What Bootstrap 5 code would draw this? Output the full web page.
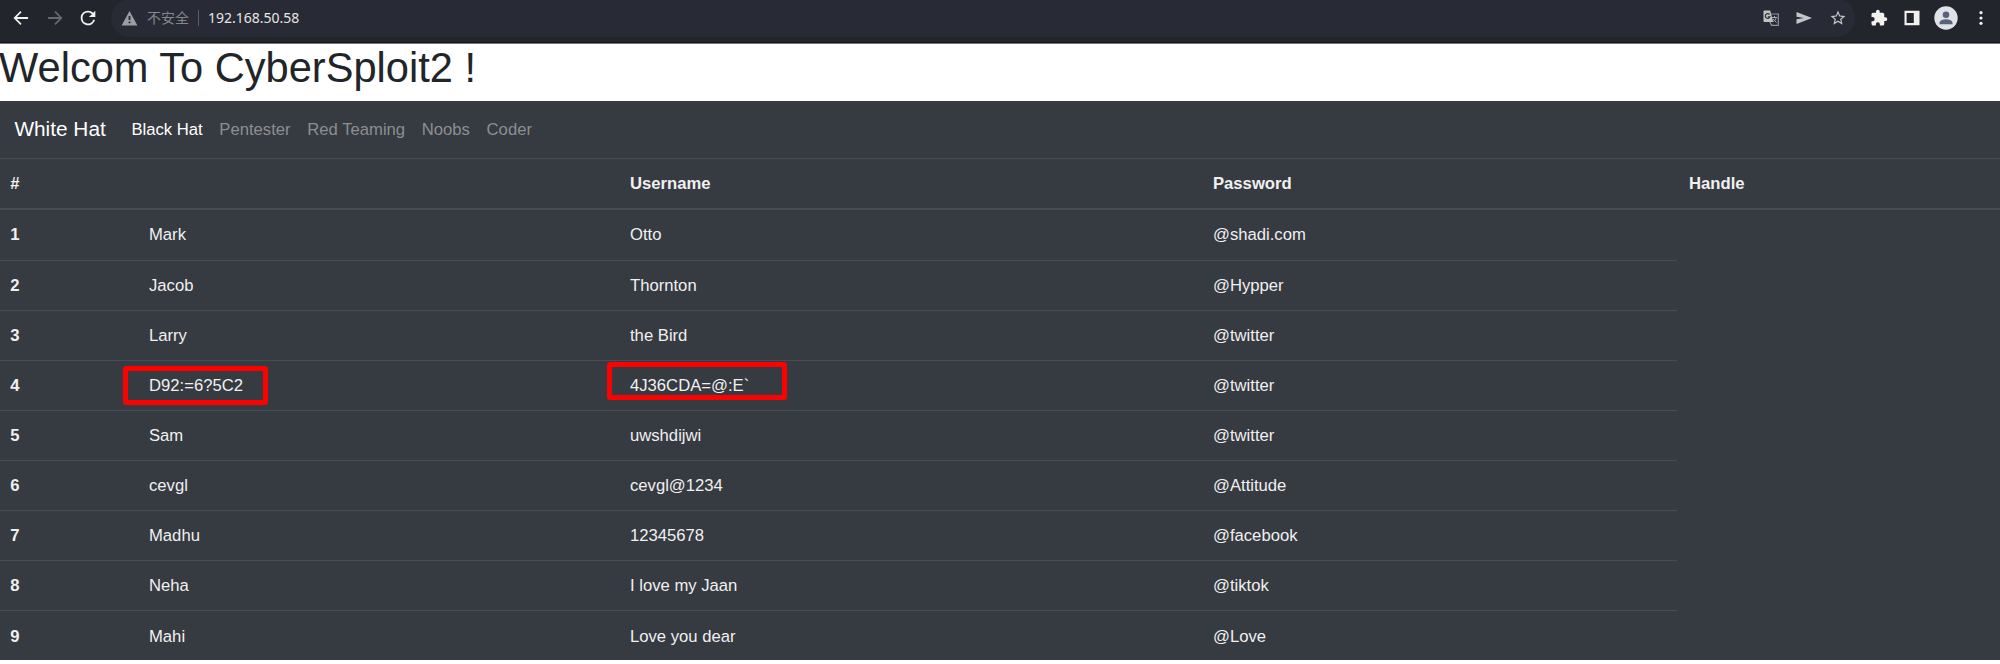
<!DOCTYPE html>
<html lang="en">
<head>
<meta charset="utf-8">
<title>CyberSploit2</title>
<link href="https://cdn.jsdelivr.net/npm/bootstrap@5.3.0/dist/css/bootstrap.min.css" rel="stylesheet">
<style>
html{font-size:16.66px}
body{font-family:"Liberation Sans",Arial,sans-serif;overflow:hidden;height:664px;line-height:1.5;background:#fff}
.chrome-bar{height:44px;background:#23252d;border-bottom:1px solid #77767a;box-shadow:inset 0 -1px #15161b;font-family:"Noto Sans","Noto Sans CJK SC",sans-serif;font-size:14px;color:#e6e6e6;padding:0 11px 8px 11px}
.omni{background:#282a35;height:38px;border-radius:19px;margin-left:12px;padding:0 8px 0 8px}
.warn-text{color:#85878c;margin-left:7px}
.sep{width:1px;height:16px;background:#5c5e66;margin:0 9px 0 9px}
svg{display:block;flex:none}
h1.title{font-size:41.6px;font-weight:400;height:57px;margin:0;line-height:48px;color:#212529;margin-left:-1px}
.hats{background:#363a41;height:57px;padding:0 0 0 14.4px}
.hats .navbar-brand{font-size:1.25rem;color:#fff;margin-right:17.3px;padding:4px 0 5px}
.hats .nav-link{color:#8c8f92;padding:9px 8.35px 8px}
.hats .nav-link.active{color:#fff}
.creds{table-layout:fixed;width:2000px;margin:0;border-collapse:separate;border-spacing:0;color:#f0f0f0}
.creds>:not(caption)>*>*{background:transparent;color:inherit;border:0;border-top:1px solid #454d55;padding:1px 12.3px 0;height:50.143px;box-shadow:none;line-height:24px;vertical-align:middle}
.creds>thead>tr>*{border-bottom:2px solid #454d55;height:52px}
.creds>tbody>tr:first-child>*{border-top:0;height:49.5px}
.creds>:not(caption)>*>*:first-child{padding-left:10.3px}
.sheet{background:#363a41;height:502px;overflow:hidden}
.hit{position:relative;display:inline-block}
.hit::after{content:"";position:absolute;border:5px solid #f00;border-radius:3px}
.hit-a::after{left:-26px;top:-8px;width:145px;height:39px}
.hit-b::after{left:-23px;top:-12px;width:180px;height:38px}
</style>
</head>
<body>
<header class="chrome-bar d-flex align-items-center">
<svg width="20" height="20" viewBox="0 0 24 24" fill="#f1f1ee"><path d="M20.5 10.8H7.1l5.6-5.6L11.3 3.700 3 12l8.300 8.300 1.400-1.500-5.600-5.600h13.400z"/></svg>
<svg style="margin-left:14px" width="20" height="20" viewBox="0 0 24 24" fill="#68696e"><path d="M3.500 10.800h13.400l-5.600-5.600 1.400-1.500L21 12l-8.300 8.300-1.400-1.500 5.600-5.600H3.500z"/></svg>
<svg style="margin-left:12px" width="22" height="22" viewBox="0 0 24 24" fill="#f1f1ee"><path d="M17.650 6.350A7.960 7.960 0 0 0 12 4a8 8 0 1 0 7.730 10h-2.080A6 6 0 1 1 12 6c1.660 0 3.140.69 4.220 1.780L13 11h7V4z"/></svg>
<div class="omni d-flex align-items-center flex-grow-1">
<svg width="21" height="20" viewBox="0 0 24 24" fill="#9b9da3"><path fill-rule="evenodd" d="M2.500 21h19L12 3.500zM10.900 9.500h2.200v5h-2.200zM10.900 16.200h2.200v2.200h-2.200z"/></svg>
<span class="warn-text">不安全</span><span class="sep"></span><span>192.168.50.58</span>
<div class="ms-auto d-flex align-items-center">
<svg width="16" height="16" viewBox="0 0 16 16"><path d="M6 4h9.300v11.300H8.500L7 12" fill="none" stroke="#92949a" stroke-width="1.200"/><path d="M1.200.5h6l3 11.500h-9A1 1 0 0 1 .5 11V1.200A.7.700 0 0 1 1.200.5z" fill="#c3c3c3"/><path d="M6.600 4.500A2.400 2.400 0 1 0 7 6.800H4.800" fill="none" stroke="#303139" stroke-width="1.200"/><path d="M9 7.500h5M11.500 6v1.500M13.300 7.500c-.5 2-2 3.500-3 4M10 9l3.500 3.500" fill="none" stroke="#aaacb0"/></svg>
<svg style="margin-left:17px" width="17" height="16" viewBox="0 0 17 16" fill="#c5c6c8"><path d="M.5 2 16 8 .5 14V9.300L8 8 .5 6.700z"/></svg>
<svg style="margin-left:16px" width="18" height="18" viewBox="0 0 24 24" fill="#c5c6c8"><path d="m22 9.240-7.190-.62L12 2 9.190 8.630 2 9.240l5.460 4.730L5.820 21 12 17.270 18.180 21l-1.630-7.030zM12 15.400l-3.760 2.270 1-4.280-3.320-2.880 4.380-.38L12 6.100l1.710 4.040 4.380.38-3.320 2.880 1 4.280z"/></svg>
</div></div>
<svg style="margin-left:15px" width="18" height="18" viewBox="0 0 24 24" fill="#f1f1ee"><path d="M20.500 11H19V7a2 2 0 0 0-2-2h-4V3.500a2.500 2.500 0 0 0-5 0V5H4a2 2 0 0 0-2 2v3.800h1.500a2.700 2.700 0 0 1 0 5.400H2V20c0 1.100.9 2 2 2h3.800v-1.500a2.700 2.700 0 0 1 5.400 0V22H17a2 2 0 0 0 2-2v-4h1.500a2.500 2.500 0 0 0 0-5z"/></svg>
<svg style="margin-left:16px" width="16" height="16" viewBox="0 0 16 16"><path fill="#f1f1ee" fill-rule="evenodd" d="M.5.800h15v14.400H.5zM2.600 2.900v10.200h7.200V2.900z"/></svg>
<svg style="margin-left:14px" width="24" height="24" viewBox="0 0 24 24"><circle cx="12" cy="12" r="11.700" fill="#dfe2e9"/><circle cx="12" cy="8.800" r="3.300" fill="#56647a"/><path d="M5.500 18.300v-1.400c0-2.500 4.300-3.600 6.500-3.600s6.500 1.100 6.500 3.600v1.400z" fill="#56647a"/></svg>
<svg style="margin-left:15px" width="16" height="16" viewBox="0 0 16 16" fill="#f1f1ee"><circle cx="8" cy="2.700" r="1.600"/><circle cx="8" cy="8" r="1.600"/><circle cx="8" cy="13.300" r="1.600"/></svg>
</header>
<h1 class="title">Welcom To CyberSploit2 !</h1>
<nav class="hats navbar navbar-expand">
<a class="navbar-brand" href="#">White Hat</a>
<div class="navbar-nav">
<a class="nav-link active" href="#">Black Hat</a><a class="nav-link" href="#">Pentester</a><a class="nav-link" href="#">Red Teaming</a><a class="nav-link" href="#">Noobs</a><a class="nav-link" href="#">Coder</a>
</div>
</nav>
<div class="sheet">
<table class="table creds">
<colgroup><col style="width:136.700px"><col style="width:481px"><col style="width:583px"><col style="width:476px"><col></colgroup>
<thead><tr><th>#</th><th></th><th>Username</th><th>Password</th><th>Handle</th></tr></thead>
<tbody>
<tr><th>1</th><td>Mark</td><td>Otto</td><td>@shadi.com</td></tr>
<tr><th>2</th><td>Jacob</td><td>Thornton</td><td>@Hypper</td></tr>
<tr><th>3</th><td>Larry</td><td>the Bird</td><td>@twitter</td></tr>
<tr><th>4</th><td><span class="hit hit-a">D92:=6?5C2</span></td><td><span class="hit hit-b">4J36CDA=@:E`</span></td><td>@twitter</td></tr>
<tr><th>5</th><td>Sam</td><td>uwshdijwi</td><td>@twitter</td></tr>
<tr><th>6</th><td>cevgl</td><td>cevgl@1234</td><td>@Attitude</td></tr>
<tr><th>7</th><td>Madhu</td><td>12345678</td><td>@facebook</td></tr>
<tr><th>8</th><td>Neha</td><td>I love my Jaan</td><td>@tiktok</td></tr>
<tr><th>9</th><td>Mahi</td><td>Love you dear</td><td>@Love</td></tr>
</tbody></table>
</div>
</body>
</html>
